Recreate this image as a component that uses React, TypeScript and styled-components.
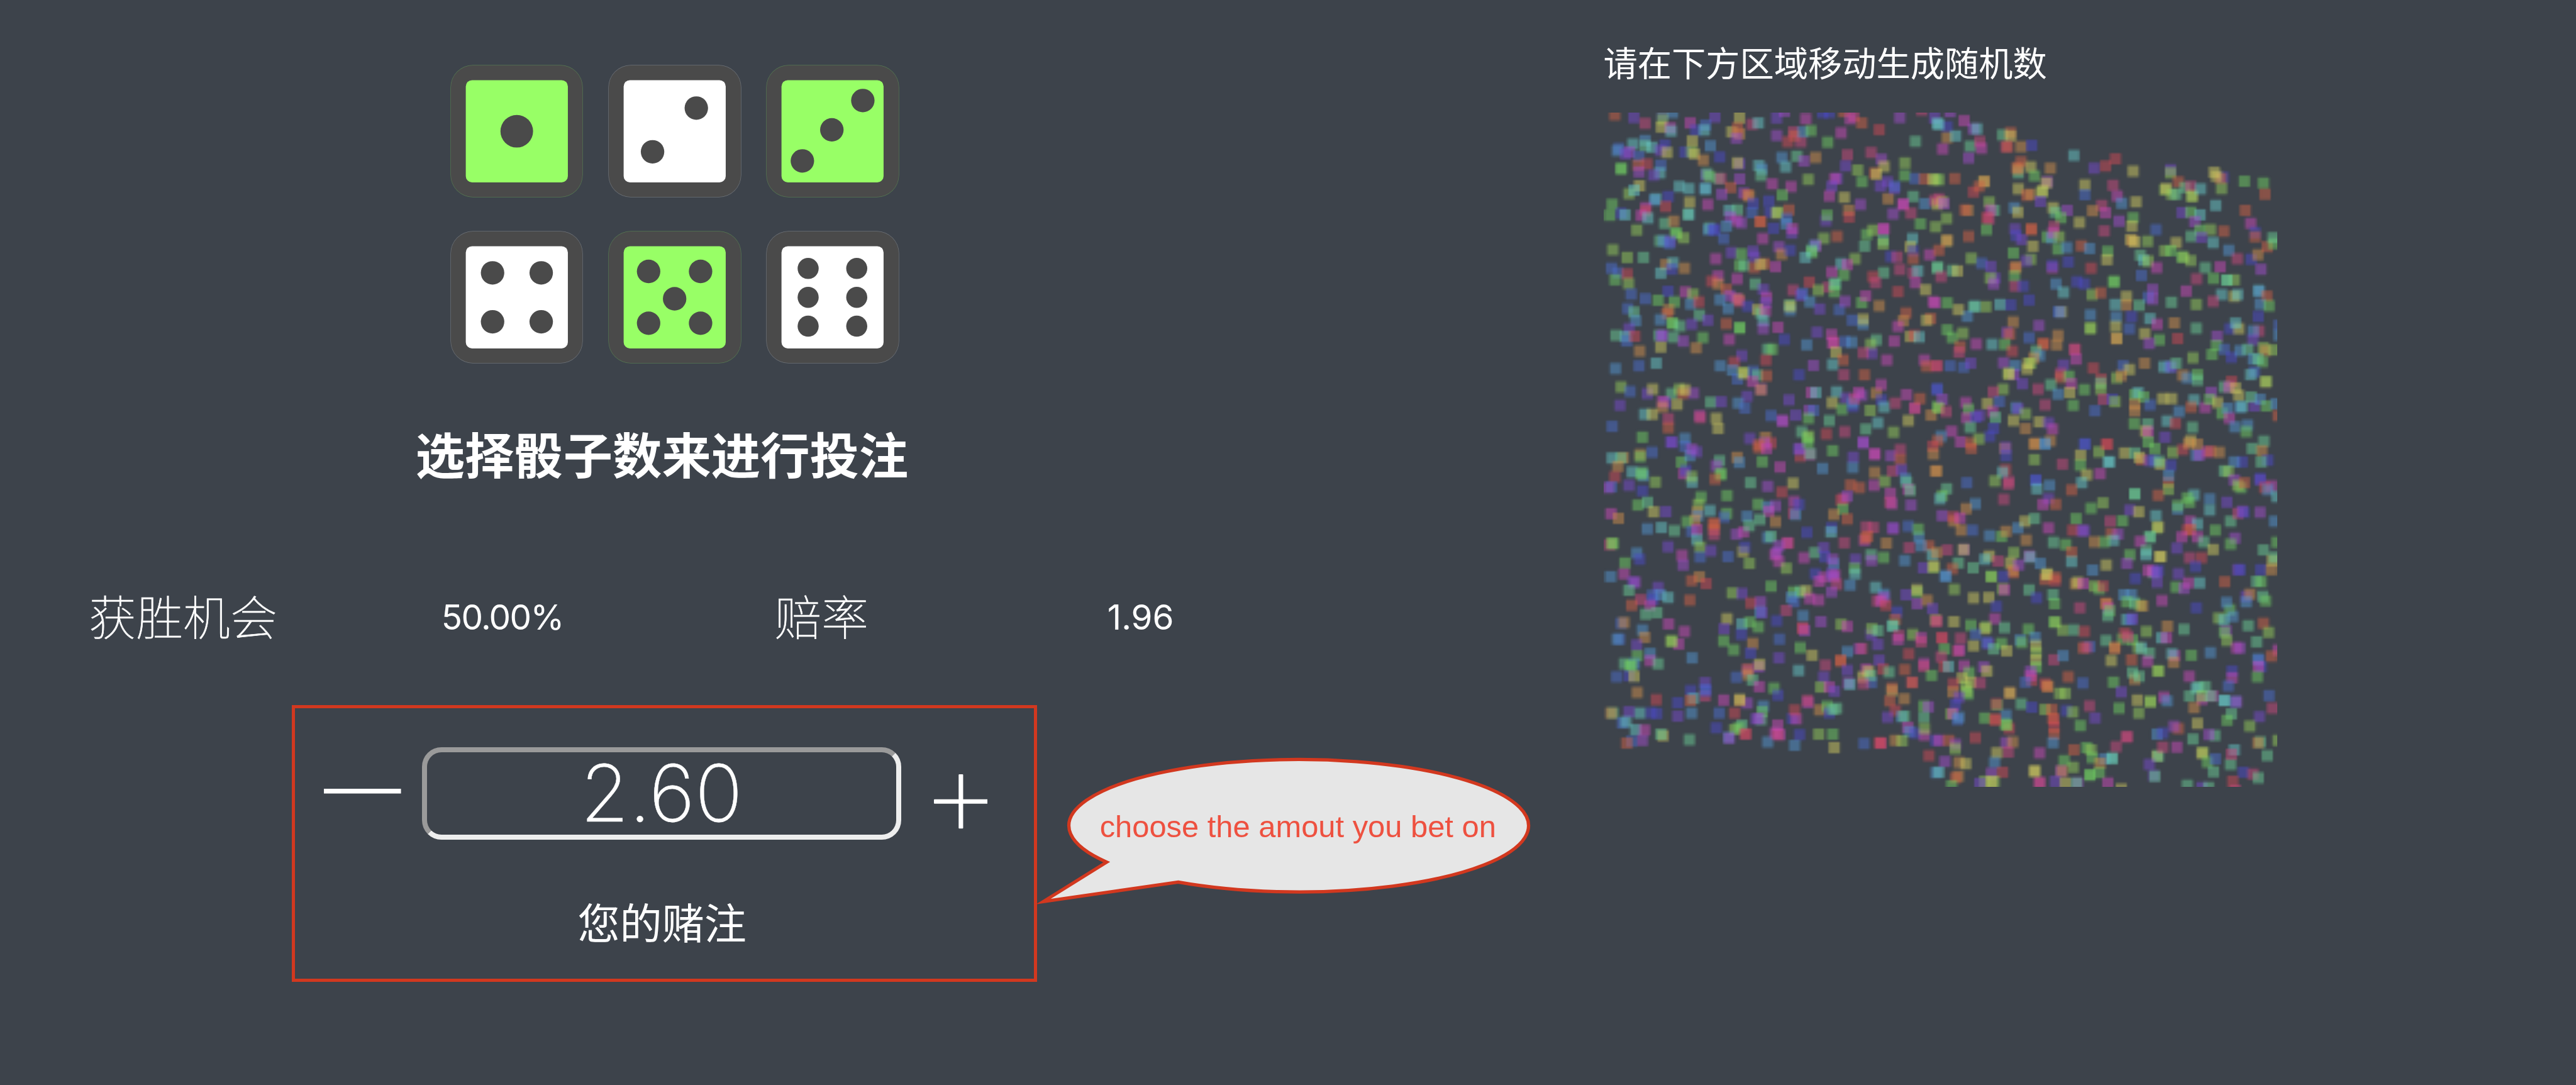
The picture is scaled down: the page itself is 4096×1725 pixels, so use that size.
import React, { useLayoutEffect, useRef } from "react";
import styled, { createGlobalStyle } from "styled-components";

const SCALE = 0.9971;
const px = (n: number) => `${Math.round(n * SCALE * 100) / 100}px`;

const CJK = `"Noto Sans CJK SC", sans-serif`;

const GlobalStyle = createGlobalStyle`
  html, body { margin: 0; padding: 0; background: #3d434b; }
  * { box-sizing: border-box; }
`;

const Page = styled.main`
  width: 4096px;
  height: 1725px;
  display: flex;
  align-items: flex-start;
  overflow: hidden;
  background: #3d434b;
  color: #fff;
  font-family: ${CJK};
`;

const Game = styled.section`
  width: ${px(2557)};
  flex: none;
  padding: ${px(104)} 0 0 ${px(37.5)};
`;

const Column = styled.div`
  width: ${px(2036)};
  display: flex;
  flex-direction: column;
  align-items: center;
`;

const DiceGrid = styled.div`
  display: grid;
  grid-template-columns: repeat(3, ${px(210)});
  gap: ${px(54.7)} ${px(42)};
  margin-left: ${px(41)};
`;

const Die = styled.button<{ $picked: boolean }>`
  width: ${px(210)};
  height: ${px(210)};
  padding: 0;
  border: 0;
  border-radius: ${px(35)};
  background: #4a4a4a;
  box-shadow: 0 0 0 0.7px ${(p) => (p.$picked ? "rgba(152,255,102,.28)" : "rgba(255,255,255,.25)")};
  svg { display: block; width: 100%; height: 100%; }
`;

const Heading = styled.h1`
  margin: ${px(83.8)} 0 0;
  height: ${px(120)};
  line-height: ${px(120)};
  font-size: ${px(78.6)};
  font-weight: 700;
  white-space: nowrap;
`;

const Stats = styled.div`
  width: 100%;
  margin-top: ${px(152)};
  height: ${px(100)};
  display: grid;
  grid-template-columns: repeat(4, 1fr);
  text-align: center;
`;

const StatLabel = styled.span`
  font-size: ${px(75)};
  font-weight: 100;
  line-height: ${px(92)};
  -webkit-text-stroke: 0.7px #fff;
`;

const StatValue = styled.span<{ $tight?: boolean }>`
  font-family: Inter, "Liberation Sans", sans-serif;
  font-size: ${px(55)};
  font-weight: 400;
  line-height: ${px(99)};
  letter-spacing: ${(p) => (p.$tight ? "-1.7px" : "0")};
`;

const BetArea = styled.div`
  position: relative;
  width: ${px(1188)};
  height: ${px(441.5)};
  margin: ${px(89.5)} 0 0 ${px(8.5)};
  border: ${px(5.5)} solid #d2381f;
  padding: ${px(62.5)} ${px(46)} 0;
`;

const Stepper = styled.div`
  display: flex;
  align-items: flex-start;
`;

const StepButton = styled.button<{ $w: number; $h: number; $top: number; $left?: number }>`
  flex: none;
  width: ${(p) => px(p.$w)};
  height: ${(p) => px(p.$h)};
  margin: ${(p) => px(p.$top)} 0 0 ${(p) => px(p.$left ?? 0)};
  padding: 0;
  border: 0;
  background: none;
  svg { display: block; width: 100%; height: 100%; }
`;

const Amount = styled.div`
  flex: none;
  width: ${px(764)};
  height: ${px(147)};
  margin-left: ${px(33.2)};
  border: ${px(8.4)} solid;
  border-color: #9a9a9a #eee #eee #9a9a9a;
  border-radius: ${px(31)};
  text-align: center;
  font-family: Inter, "Liberation Sans", sans-serif;
  font-size: ${px(126)};
  font-weight: 200;
  line-height: ${px(130)};
  -webkit-text-stroke: 0.4px #fff;
`;

const BetLabel = styled.p`
  margin: ${px(79.5)} ${px(8)} 0 0;
  height: ${px(100)};
  line-height: ${px(100)};
  font-size: ${px(67.3)};
  text-align: center;
`;

const Callout = styled.div`
  position: absolute;
  left: ${px(1178)};
  top: ${px(76)};
  width: ${px(800)};
  height: ${px(245)};
  svg { position: absolute; inset: 0; width: 100%; height: 100%; }
`;

const CalloutText = styled.span`
  position: absolute;
  left: ${px(105)};
  top: ${px(84)};
  font-family: "Liberation Sans", sans-serif;
  font-size: ${px(49)};
  line-height: ${px(60)};
  white-space: nowrap;
  color: #ee5140;
`;

const Entropy = styled.section`
  flex: none;
  padding-top: ${px(58)};
`;

const Hint = styled.p`
  margin: 0;
  height: ${px(80)};
  line-height: ${px(80)};
  font-size: ${px(54.4)};
  white-space: nowrap;
`;

const Board = styled.canvas`
  display: block;
  width: ${px(1075)};
  height: ${px(1075)};
  margin-top: ${px(42)};
`;

type Pip = [number, number];
const FACES: { pips: Pip[]; r: number; picked: boolean }[] = [
  { pips: [[105, 105]], r: 26, picked: true },
  { pips: [[139.6, 68], [69.8, 137.7]], r: 18.7, picked: false },
  { pips: [[153.4, 56], [104, 102.7], [57, 152.3]], r: 18.7, picked: true },
  { pips: [[66.4, 66], [144, 66], [66.4, 144], [144, 144]], r: 18.7, picked: false },
  { pips: [[63.5, 63.7], [146.4, 63.7], [105, 107.3], [63.5, 146.3], [146.4, 146.3]], r: 18.7, picked: true },
  { pips: [[66.2, 59], [143.7, 59], [66.2, 105], [143.7, 105], [66.2, 151], [143.7, 151]], r: 16.8, picked: false },
];

/* RGB of each mark colour on the board; marks are painted half transparent. */
const COLOURS: Record<string, string> = {
  r: "207,73,85", o: "209,97,69", a: "209,143,75", y: "209,203,95", l: "149,205,89",
  g: "111,205,97", t: "107,205,149", c: "103,201,201", s: "83,149,209", b: "75,109,205",
  i: "75,73,201", v: "119,73,205", p: "163,77,205", m: "203,73,185", k: "203,73,125",
};

/* Marks per board quarter: centre x, centre y and colour key; "2" doubles a mark. */
const MARKS: { ox: number; oy: number; list: string }[] = [
  { ox: -4.74, oy: -5.58, list: `
97,66o 182,78v 310,66i 355,56s 310,85l 232,104k 305,120y 345,124m 348,138c 434,102m 544,76v 502,112b 458,134i 497,134c 443,182y 654,80y 620,142y 655,150a 645,125o 640,170p 710,108k 738,102c 820,80v 855,50p 950,84m 1025,56i 1055,56i 1120,52o 1165,72k 1148,84m 1200,102o 1278,132r 1370,78p 1468,45k 1525,80v 1537,105c
820,158p 895,142k 900,160o 870,186r 928,186k 938,142s 973,136g 1108,146m 1048,188g 1440,184t 115,216b 108,226s 178,196c 232,180s 232,204t 262,210c 162,232p 145,240v 205,252b 320,200i 300,225v 330,234y 410,232i 440,230l 452,240y 492,268a 524,204s 566,254i
240,285r 200,290o 205,320p 125,306g2 302,290b 298,325c 270,335v 655,285v 645,280y 740,292c 755,308s 750,336t 843,256s 910,250t 860,298c 942,272p 994,256a 1136,244k 1242,234k 1288,264p 1300,296y 1128,294v 1182,312l 1258,326o 1266,330y 1393,280l 1392,336g 1201,364g
505,335v 508,328t 520,340g 560,350t 570,350k 655,352p 500,395s 502,396c 385,385c 428,395c 207,382y 160,418l 183,402c 800,374m 884,386m 614,390o 575,420p 672,415p 690,422o 697,428a 961,354l 1090,350v 1080,350m 1066,385v 1055,428m 1122,434y 845,424g 785,450i 336,430i 280,440c 274,446s 324,475r 431,456y 512,466m 424,510t 428,510c 85,465g 75,514g 125,505i 142,512c 235,480m 235,495r 215,515m 245,526c 195,580l
1318,440a 1283,384v 1315,365v 1345,395v 1348,385b 1430,430t 1438,350b 1480,352o 1530,354g 1518,354y 1194,466p 1385,465m2 1420,505k 1340,508p 1482,462s 1525,448k 1538,465y 1462,552g 1530,565l
608,492c 645,490t 715,460i 710,502b 790,500i 820,504y 824,500l 875,490o 864,528b 862,552s 612,520p 640,538m 662,548p 747,542o2 806,572i 888,594v 890,574m 596,562s 520,570t 515,578s 540,578i2 583,618b 320,550t 360,540a 370,595g2 405,615l 298,628t 315,628s 345,630v 340,640b 758,618m 1040,538v 1045,514g 1142,492a 1143,522r 1090,608o 1030,617l
995,650m 990,648s 975,670t 978,680g 948,702c 1170,708l 1222,600g 1250,580l 1213,652t 1298,575m2 1296,625t 1295,642l 1427,618c 1417,655y 1430,675i 1430,708o 1503,690m 1330,698i 1358,700k
88,668l 152,702l 225,702t 618,680v 662,686g 714,675v 830,655p 842,688a 880,670i 548,708m 655,738g 675,738t 720,700v 720,748o 765,730o 748,732y 815,744m 82,750b 110,770b 152,776r 98,802g 158,818l 325,734a 357,726c 350,755i 302,772c 408,750a
1108,730c 1135,735m 1066,768m 1120,780g 1050,835k 1080,820t2 1078,856g 1298,770t 1250,788r 1262,815k 1370,756k 1430,770k 1450,762c 1440,815m 1537,750t
558,785m 530,808r 558,820a 643,798m 724,820t 595,845o 610,872p 640,885m 650,890a 655,898k 335,853i 170,866b 233,886b 290,893g 363,900g 412,856m 446,866l 436,910s 472,900r 567,890s 603,930s 690,920i 760,845v 775,880m 770,905v 735,935y 750,950t 770,940m 760,985c 760,1020p
966,812r 1006,848l 893,848k 928,872v 935,862b 968,900s 1012,932v 1100,936b 1125,898p 1200,904g 1218,874m 1278,918a 1362,855r 1485,846y 1528,904m 880,938s 878,915t 880,920y
155,930b 182,946t 190,985s 338,935a 330,955o 300,980s 355,996g2 388,1008t 475,960t 512,982v 440,1000v 595,998o 655,1016g2 826,1014m 160,1020v 102,1050t 145,1055c 150,1075b 186,1054r 295,1050t 305,1052v 310,1050p 358,1058t 302,1102y 402,1076p 490,1060g 208,1120a 460,1106a 608,1068m 854,1068i 780,1112t 800,1112g 664,1140v 772,1160r 630,1170r
1000,1036v 1065,1046m 1075,1080k 1070,1084m 1085,1125y 1125,1078b 1155,1080s 954,1092s 1205,1000s 1206,978y 1158,982b 1398,950o 1385,985a 1362,1010m 1508,975o 1490,982y 1265,1070t 1240,1090l 1245,1130v 1207,1128k 1345,1076m 1418,1055y 1435,1050r 1457,1057c 1312,1160m 1480,1160m 1490,1188o 1534,1186r 1117,1160o 1070,1180c 984,1184p 920,1226i 1120,1226k 1212,1226o
100,1198s 205,1186b 282,1174c 568,1186s 125,1280l 165,1300b 242,1310v 266,1290y 350,1310t 385,1290l 448,1308p 400,1310o 410,1292y 322,1350v 310,1345m 310,1370a 375,1358y 120,1362v 525,1348t 572,1346v 230,1402c 265,1402y 336,1422k 336,1462o 476,1408m 478,1418k 550,1420y 558,1465y 85,1456b 220,1504g 350,1526v 410,1510s
622,1205s 645,1245b 672,1215l 672,1220y 715,1210b 735,1228t 775,1230o 712,1256m 750,1290p 750,1292a 688,1322v 648,1352s 678,1375b 875,1338v 795,1408b 848,1432m 844,1430p 905,1406v
975,1305m 995,1305c 965,1385p 985,1385b 962,1420g 1088,1302c 1068,1350y 1130,1330v 1112,1380g 1160,1368i 1160,1350s 1168,1332k 1200,1318p 1186,1305m 1265,1308a 1287,1270m 1288,1338i 1300,1370c 1350,1352k 1400,1314m 1436,1372m 1438,1376k 1460,1332o 1238,1385l 1408,1430y 1510,1406a 1538,1290b 1538,1368g 1055,1430t 1272,1440c 1218,1468t 1342,1482l 1042,1490r 1124,1480k 932,1480t 958,1508g 962,1500l 700,1510v 770,1505a 795,1530r 765,1530p 740,1538o 1206,1528p` },
  { ox: 148.75, oy: -5.58, list: `
55,52p 118,92m 160,128p 175,128c 42,118i 5,108c 42,168a 80,160c 22,218m 145,206t 188,185k 195,215m 138,258p 290,155t 325,145o 325,160y 305,208k 312,208o 372,208a 420,202i 372,275o 360,325t 355,300o 357,308a 415,298y 432,338g 503,304a 608,247c 698,304v 750,294r 794,262r 873,317y 1040,310v 1040,325l 1075,365o 1015,400l 1020,395y 1045,420l 1065,420t 1105,390t 1130,385k 1137,428y 1135,430l 1174,396c 1275,345i 1265,350o 1235,322y 1245,340y 1268,395l 1370,362g 1455,370g 1462,420o
5,355l 76,350o 206,364y 208,362a 160,410r 185,385o 5,440k 22,455y 28,462p 135,492a 122,490o 230,455l 252,492t 235,490m 220,525r 230,530k 218,578g 40,528l 138,608o 40,628y 42,625a 5,670o 360,396y 398,425o 415,420a 490,365p 485,370y 465,410l 468,405y 458,452v 342,480s 358,500y 657,378y 657,422b 783,380k 802,428m 822,460s 733,470k 750,503m 692,494a 886,454y 873,525g 867,562y 810,540p 578,492p 515,480y 525,500t 550,525g 633,546y 1242,470c 1374,492o 1092,502v 1130,500g 1172,512c 1148,542p 1398,550m 1418,590i 1418,610o 1278,585o 1218,578l 1172,580g 1132,608t 1178,612v 1230,636c 975,578b 744,584k
345,575v 350,605i 375,622v 418,576o2 520,565k 490,610g 508,615s 515,590m 542,610l 537,665g 576,658s 642,650o 678,662s 425,652y 338,682g 415,710l 395,718v 759,675g 756,712y 862,622y 868,628a 880,632y 937,630l 1065,636y 1015,672l 1042,672g 1090,700g 1098,700l 1130,716l 905,692t 920,715c 940,718l 978,748m 1300,670s 1338,708k 1400,710i 1430,690a 1472,655o 1500,640g 1498,614t 1444,755p 1262,744m 1195,748t
150,706l 196,728b 237,742v 0,745t 15,788k 65,760t 88,762y 255,795v 235,795l 250,820p 345,750o 350,745a 343,785g 345,830k 382,830i 512,748m 512,738i 583,722i 685,750r 787,810g2 622,810i 655,820i 528,820s 562,858c 910,782b 1156,798k 1232,796g 1325,802l 1292,803t2 1110,852m 960,845p 940,880b 960,888p 843,876y 842,915a 690,868l 728,860o 793,912c 900,916t 1268,868c 1325,876y 1340,868c 1230,898k 1434,850c 1435,852s 1470,875o 1440,910s 1480,918g 1155,912l 1044,902t 1432,966i
408,892i 326,914i 278,912c 215,922l 165,920c 162,922t 132,965s 92,935y 42,905g -20,900m 540,945b 552,945y 545,945b 682,958s 797,968s 865,966i 948,975c 980,1000m 856,1020b 795,1010y 800,1064y 798,1065a 925,1042y 990,1070g 945,1086p 1072,1064r 1057,994a 1155,1018t 1305,1020i 1345,1020y 1330,995c 1248,1054p 1435,1030k 1410,1030s 1408,1070v 1525,1005b 1525,1050s
682,1018l2 337,990a 310,1038p 322,1045o 452,1006p 408,1060b 537,1050a 532,1092a 472,1088o2 612,1112k2 618,1156m 42,1025g 65,1060g 112,1040l 172,1088m 243,1090c 100,1100o 95,1125k 300,1090g 333,1120r 440,1120t 455,1140s 430,1150a 405,1175y 415,1175l 400,1200y -5,1186k 55,1186b 115,1192b 147,1174v 294,1172p 345,1185s 340,1225p 315,1220l 318,1222y 378,1266v 562,1182v 548,1220k 548,1238o 586,1232g 596,1265m 505,1270t 590,1305y 537,1312s 448,1290k 655,1292g 695,1196r 730,1245r 728,1262t 728,1290l 828,1185b 856,1202y 800,1240l 820,1230a 924,1174a 1010,1190c 1035,1190s 1045,1190v 1065,1174t 1140,1150l 1095,1228a 1115,1240s 1160,1225g 1160,1250t 1245,1095g 1225,1135g 1280,1112b 1312,1148i 1350,1118s 1385,1112t 1455,1105l 1465,1118a 1500,1115l 1410,1155s 1450,1168g 1430,1155t 1415,1212b 1398,1225c 1465,1258y 1467,1255l 1313,1255r 1280,1280t 1300,1280m 1330,1285y 1222,1304p 1345,1318y
292,1290l 248,1302k 222,1354y 275,1345b -5,1290i 20,1335p 5,1375l 38,1390k 125,1350m 138,1380g 130,1418m 170,1415i 185,1408v 245,1390m 258,1416t 350,1372s 360,1378v 392,1400l 338,1430y 392,1466a 454,1436y 480,1360k 495,1440v 513,1468m 605,1362g 702,1386b 740,1335k 780,1335i 792,1346l 880,1315g 895,1305c 920,1325g 880,1358a 880,1388a 948,1360b 1005,1332y 1045,1332y 1145,1338c 1132,1370o 1195,1372m 1215,1335g 1250,1350y 1270,1398g 1295,1375s 1303,1420m 1078,1390s 1350,1370s 1360,1368c 1415,1365v 1400,1325t 1440,1335s 1468,1365g 1510,1355s 1520,1408o 878,1444g 938,1445t 928,1478y 940,1480m 940,1525g 1015,1504v 1025,1432c 1062,1442r 1138,1460t 1328,1458s 1384,1450s 1378,1480g 1457,1522t
62,1478m 145,1460t 250,1465i 232,1500i 15,1500s 0,1520o 102,1525m 148,1530o 184,1512l 434,1532a 480,1535s 503,1520a 657,1534b 757,1536r 1130,1520y 1160,1535a` },
  { ox: -4.74, oy: 147.9, list: `
350,-12v 85,58c 135,56a 125,58t 210,42a 210,52g 264,32b 110,95a 97,142r 175,120c 225,138s 220,122t 215,130g 278,165l 160,180v 82,186b 68,190p 220,204i 395,76g 410,5b 432,48s 462,30v 440,18p 405,128m 415,112i 442,165c 440,140l 565,70t 550,92p 570,130g2 545,152o 643,55a 653,78s 740,12o 775,15m 756,74g 835,98m 703,168t 843,210r 780,184p 893,170y 925,50r 920,20i 922,15p 960,-10g 968,42m 970,38t 1070,25g 1025,104s 1162,54v 1160,100s 1207,-10p 1258,40m2 1330,48p 1372,20k 1372,64o 1258,122a 1150,178o 1190,190o 1255,180m 1303,162l 1338,115k 1378,110v 1395,150s 1400,165t 1408,198m 1417,202t 1328,215m 1325,255k 1335,262m 1420,268p 1518,5r 1520,40a 1530,116a
200,268g 243,255t 270,298y 325,297v 80,306m 113,327a 242,374s 305,368c 363,382t 482,232g 470,265l 465,300a 468,315s 455,335a 522,292c 598,225g 597,305g 585,322b 420,342g 440,385b 463,378m 463,422c 478,455l 478,500b 526,472v 540,352o2 540,378o 540,400k 335,454v 75,445k 85,438l 88,440g 195,482s 208,510i 397,492m 402,535p 142,526g 138,575m 78,587s 178,612v 188,612p 160,648t 290,635v
737,264g 780,275s 815,272p 785,295m 688,318s 745,332t 815,342a 640,398p 672,388m 697,360t 780,412s 795,408t 898,252m 895,305k 905,310s 920,265i 955,390i 1065,370i 1063,388c 1108,245r 1120,240k 1135,228p 1115,285g 1075,310a 1135,330o 1122,436k 1220,365k 1252,368k 1212,425m 1215,415o 1227,408o 1310,438a 1340,372m 1340,370v 1408,362b 1455,412s 1452,375g 1412,458k 1500,450o 1465,450s 1515,490c 1392,515s 1298,502g 1242,490t 1243,515p 870,438r 868,436m 830,450p 812,490m 820,480p 830,520m 863,550l 942,503m 990,480t 1030,458v 1035,500i 1075,530s 1070,510p 670,475y 678,455i 698,528l 602,498b 992,574i 1010,608m 1030,590m 1065,572v 1080,580m 1075,590p 1088,622k 1065,655p 1172,510v 1168,550g 1170,575c 1148,625s 1262,635c 1475,548v 1520,548l 1522,540y
475,588a 440,605o 505,618r 432,692o 622,660l 665,662v 795,630g 705,705r 748,700p 745,745s 755,748v 895,655g 925,655t 950,650y 885,680s 898,700b 968,685m 1008,692m 862,738k 938,762s 1018,788p 820,784i 1108,800l 1135,810m 935,815r 945,828p 938,820k 1300,665s 1300,680p 1270,695k 1285,695m 1308,715r 1398,668v 1448,655g 1446,645y 1448,708p 1492,692a 1516,730v 1358,745i 1350,778o 1338,808c 1340,805t 1242,845v 1245,820l 1272,828t 1272,890v 1530,780l 1532,785k 1428,845l 1465,860m 1465,878k 1365,850k 1362,868m 1190,908p 1200,908k 1136,922s 1410,932r 1278,960v 1106,962o2
212,690k 265,670b 268,690i 300,668s 335,680c 172,715o 255,715m 235,755t 285,748t 125,795b 138,792a 337,798m 220,825s 230,858a 408,832m 382,888m 350,875l2 118,866b 108,866s 195,892v 197,940g 255,930s 255,962m 290,976t 140,975t 185,975s 168,985g2 160,1030i 183,1032y 105,1034b 442,950s 197,1104a 282,1136r 378,1150i 598,775y 585,820v 583,874g 628,914g 665,798c 700,790g 738,812g 662,845i 832,866b 713,885a 703,928i 830,950v 740,990p 743,978y 925,904g 978,938y 918,1006c 1038,982k 690,1005p 690,1000o 690,1025a 640,1036b 712,1048t 742,1078m 808,1085g 826,1116i 1030,1035v 1135,1005v 1140,1062p 1147,1068c 1017,1080l 1055,1080m 1078,1098v 500,1060v 500,1120k 505,1095i 500,1092b 436,1095i 448,1130c 435,1140o 440,1196s
1220,1000m 1230,1010y 1205,1035y 1243,1060b 1240,1028t 1208,1065k 1295,1000r 1322,1013t 1392,1002o 1478,975m 1477,988k 1512,1028g 1425,1058k 1425,1060o 1335,1095y 1335,1085o 1390,1132a 1325,1142o 1350,1185r 1315,1215v 1378,1212s 1390,1210t 1405,1260m 1412,1278s 1440,1285i 1478,1165g 1498,1168p 1478,1215t 1480,1295m 1480,1265l 1530,1318i 1285,1330k2 1280,1328r 1210,1332b 1350,1318a 1380,1320l 1500,1386r 1532,1462s 1077,1350y 1070,1290g 1008,1290l 922,1292i 900,1340s 780,1325s 835,1292m 812,1285m 825,1292k 825,1250m 890,1220i 908,1222m 900,1182r 960,1150m 958,1138k 1012,1182a 1045,1165g 1055,1195i 1070,1180t 1088,1175t 760,1165s 755,1190g 750,1225t 728,1222v 740,1220p 688,1152p 655,1140a 655,1135y 583,1138m 563,1196b 632,1196r 665,1250t 632,1270l 650,1262g 680,1290k 682,1288r 605,1305s 608,1308p 550,1262i 430,1315t 378,1210v 285,1198i 258,1195i 208,1196c 160,1190v 88,1196t 80,1196a 130,1240b 147,1235c 190,1270c 230,1272m 220,1318p 172,1322b 150,1330o 312,1297y 302,1290t` },
  { ox: 148.75, oy: 147.9, list: `
150,15o 300,15a 303,10v 305,48i 432,65l 432,-5a 480,-8s 557,85k 638,45y 637,90g 665,133y 643,168c 725,128m 720,30l 765,75c2 755,-5r 657,-5i 835,35y 880,35t 910,65o 900,55y 945,70v 968,70b 995,85y 988,72t 970,15g 1042,90i 1030,165o 1032,135s 1030,198l 985,224o 1050,32l 1095,20r 1120,-8a 1155,45s 1168,45p 1205,30m 1218,28o 1258,32a 1405,15t 1448,25a 1360,75i 1325,75s 1475,68i 1445,75t 1280,115t 1298,118l 1325,155p 1355,190g 1340,180l 1370,168o 1440,155v 1440,150i 1490,182m 1460,190r 1475,200s 1515,230c -5,115a
130,168b 303,110r 290,122c 255,160l 318,162k 315,175k 295,242k 438,158b 438,155i 443,195c 500,180s 598,200o 40,195t 20,225g 10,240c 168,262s 127,284a 20,315p 72,340a 68,320r 100,325m 105,380a 155,380b 232,404s 285,408g 305,385a 358,370s 390,340y 432,328t 495,240v 470,265m 527,264o 495,370m 618,328g 685,282g 738,258l 770,340k 825,338g 775,395o 805,398p 785,425c 745,432g 603,380r 645,382p 655,382v 517,434t 572,444g 700,432a 395,424a 880,218t2 858,290v 898,298y 975,315c 980,370l 985,365y 948,410t2 905,430m 932,470t 930,490c 1145,222c 1125,255g 1115,235g 1072,285s 1072,270g 1215,240s 1215,290c 1292,255v 1127,340m 1160,352c 1115,380r 1130,378o 1090,410m 1160,410m 1188,432t 1240,380g 1308,340t 1342,305k 1360,295p 1368,300i 1440,300p 1505,340s 1328,415p 1308,442g 1230,466y 1455,468t 1515,434g 1068,460v 1125,503k 1178,503r 1152,542i 994,498y2 858,490g 845,528p
42,468k 118,466p 115,466y -5,480a 230,495y 210,510c 92,526t 158,548t 65,552o 35,585s2 270,518k 340,480l 325,525y 338,570o 335,560a 362,535p 293,585i 238,585g 240,588l 410,495m 412,500c 458,528s 598,478o 598,520c 692,558s 753,535y 480,600o 490,575y 525,605r 525,590o 485,578y 615,620a 625,612y 650,618m 700,630l 722,642g 738,630r 408,646t 290,642l 298,645m 442,682i 228,680y 160,682y 74,644l 262,720i 255,775m 72,788y 148,804g 515,668t 522,708g 635,726k 520,790g 525,790l 558,826l 608,825t 655,832r 750,705o 755,708a 762,725m 768,740g 760,762t
883,595i 965,570t 940,560m 960,562m 985,560i 978,568v 980,612v 1075,574v 1065,634g 1100,640p 1120,615m 1170,615c 1282,610o 1340,556v 1352,556i 1443,556i 1490,556a 1495,515y 1505,500t 1425,608t 1445,610g 1378,675v 1395,665a 1378,700s 1452,675t 1465,695g 1305,735g 1290,702s 1255,772l 1318,765s 1278,780c 1002,694m 1155,726i 832,668s 865,668s 845,700g 880,705t 905,715l 915,718a 845,778c 862,778b 870,775v 825,865g 870,870g 835,840r 850,855k 932,832l 1026,808a 1100,822t 1000,860c 1022,860m 1455,795o 1478,836l 1387,806t 1425,878t 1288,830p 1280,835g 1292,872l 1335,905m 1350,905p 752,872t 792,905o 790,905a 895,905l 910,905c 945,928t 937,965m 775,962y 866,958o 1058,940m 1046,932c 1054,970a 1133,938g 1218,926s 1520,915m 1490,942o 1445,990i 1430,955s 1435,960b 1432,988m 1428,1034g
-5,785k 20,860k 18,860r 102,862k 210,820y 215,812l 170,845b 298,815t 225,885v 220,882b 250,910t 285,885g 308,918y 160,896y 30,910g 90,918k 98,915m 405,822g 368,870s 375,882g 435,858s 438,895y 440,925l 438,960y 440,992g 415,1010p 518,958k 560,940s 680,900b 650,905o 665,903k 15,945k 30,988r 48,988c 118,985m 205,990p 220,1008y 140,1015g 110,1040y 148,1058y 125,1075l 70,1065r 190,1062k 68,1102a 135,1112g 130,1098l 95,1125v 80,1158i 60,1200l 68,1198m 88,1225b 95,1215s 210,1218g 305,1205s 320,1265r 308,1250l 302,1245g 255,1225o 258,1225r 265,1160g 262,1155r 322,1106o 322,1106y 373,1155t 420,1170i 420,1050r 415,1030m 392,1058b 480,1065r 490,1078o 492,1076a 583,1034o 648,1062b 545,1108l 570,1108l 785,1058g 880,1045a 870,1015t 900,1032t 985,1008l2 820,1102v 678,1164k 703,1218v 810,1174g 892,1138y 950,1145l2 898,1196l 1010,1125m 1025,1142s 1124,1032m 1315,1008i 1315,1038m 1298,1075b 1165,1080t 1155,1085c 1195,1078t 1125,1120t 1180,1135m 1180,1120l 1228,1120m 1218,1120t 1145,1172a 1280,1140c2 1330,1145s 1335,1145p 1480,1118b 1495,1174k 1437,1212v 1312,1200t 1293,1228g 1160,1242y 1394,1254l 480,1180l 510,1180o 518,1225r 515,1220o 520,1258r 520,1290o 515,1328s 575,1185i 603,1192l 637,1252g 845,1302k2 1075,1265o 1055,1255p 980,1290s 1005,1285i 1140,1312t 1238,1296t 1212,1292p 1442,1325t 1430,1328a 1520,1318l
168,1306r 5,1318m 50,1318o 80,1335p 78,1355l 305,1328p 335,1325a 315,1370k 264,1373y 254,1416s 240,1465p 290,1460r 210,1500l 252,1500l 240,1502y 188,1510v 32,1412p 95,1416a 125,1422y 92,1478a 80,1485o 5,1460c 62,1520g 455,1374m 608,1360o 665,1350g 685,1360l 690,1395g 797,1346k 745,1400s 780,1398t 778,1398c 725,1420a 605,1438l 565,1408g 550,1455p 555,1455a 525,1500v 570,1508y 625,1508p 620,1508t 455,1505m 455,1508k 433,1455y2 680,1472g2 722,1462g 760,1508m 820,1535y 980,1388y 985,1388t 1005,1348k 1068,1348m 945,1425v 965,1475v 970,1478t 1115,1518t 1180,1528v 1210,1528t 1185,1372l 1180,1375y 1205,1415g 1240,1400b 1232,1458t 1308,1425t 1325,1360c 1312,1380k 1365,1460i 1408,1468k 1432,1485t 1472,1386t 1318,1500r 1330,1540k` },
];

function drawMarks(ctx: CanvasRenderingContext2D) {
  ctx.clearRect(0, 0, 300, 300);
  for (const { ox, oy, list } of MARKS) {
    for (const m of list.matchAll(/(-?\d+),(-?\d+)([a-z])(2?)/g)) {
      const x = ox + Number(m[1]) / 10.03 - 2.5;
      const y = oy + Number(m[2]) / 10.03 - 2.5;
      ctx.fillStyle = `rgba(${COLOURS[m[3]]},0.5)`;
      for (let n = m[4] ? 2 : 1; n > 0; n--) ctx.fillRect(x, y, 5, 5);
    }
  }
}

function MarkBoard() {
  const ref = useRef<HTMLCanvasElement>(null);
  useLayoutEffect(() => {
    const ctx = ref.current?.getContext("2d");
    if (ctx) drawMarks(ctx);
  }, []);
  return <Board ref={ref} width={300} height={300} />;
}

export default function App() {
  return (
    <Page>
      <GlobalStyle />
      <Game>
        <Column>
          <DiceGrid>
            {FACES.map((f, n) => (
              <Die key={n} $picked={f.picked}>
                <svg viewBox="0 0 210 210">
                  <rect x="23.7" y="23.5" width="162.8" height="163" rx="10" fill={f.picked ? "#98ff66" : "#fff"} />
                  {f.pips.map(([x, y]) => (
                    <circle key={`${x}-${y}`} cx={x} cy={y} r={f.r} fill="#4a4a4a" />
                  ))}
                </svg>
              </Die>
            ))}
          </DiceGrid>
          <Heading>选择骰子数来进行投注</Heading>
          <Stats>
            <StatLabel>获胜机会</StatLabel>
            <StatValue $tight>50.00%</StatValue>
            <StatLabel>赔率</StatLabel>
            <StatValue>1.96</StatValue>
          </Stats>
          <BetArea>
            <Stepper>
              <StepButton $w={123} $h={8} $top={66}>
                <svg viewBox="0 0 123 8"><rect width="123" height="7.6" fill="#fff" /></svg>
              </StepButton>
              <Amount>2.60</Amount>
              <StepButton $w={86} $h={87} $top={43} $left={52}>
                <svg viewBox="0 0 86 87">
                  <rect x="0" y="39.8" width="86" height="7.2" rx="1" fill="#fff" />
                  <rect x="39.4" y="0" width="7.2" height="86.5" rx="1" fill="#fff" />
                </svg>
              </StepButton>
            </Stepper>
            <BetLabel>您的赌注</BetLabel>
            <Callout>
              <svg viewBox="0 0 800 245">
                <path
                  d="M116 170.1 A366.5 105.6 0 1 1 230 202 L15 233 Z"
                  fill="#e6e6e6"
                  stroke="#d2381f"
                  strokeWidth="5.2"
                  strokeMiterlimit="12"
                />
              </svg>
              <CalloutText>choose the amout you bet on</CalloutText>
            </Callout>
          </BetArea>
        </Column>
      </Game>
      <Entropy>
        <Hint>请在下方区域移动生成随机数</Hint>
        <MarkBoard />
      </Entropy>
    </Page>
  );
}
